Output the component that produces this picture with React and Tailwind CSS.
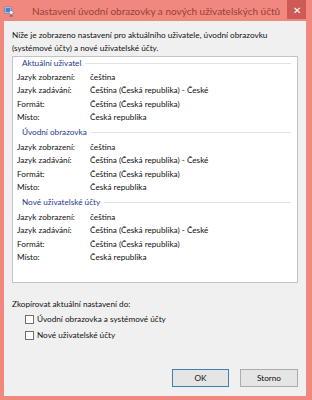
import React from "react";

const sections = [
  { title: "Aktuální uživatel", first: true },
  { title: "Úvodní obrazovka" },
  { title: "Nové uživatelské účty" },
];

const rows = [
  ["Jazyk zobrazení:", "čeština"],
  ["Jazyk zadávání:", "Čeština (Česká republika) - České"],
  ["Formát:", "Čeština (Česká republika)"],
  ["Místo:", "Česká republika"],
];

function Icon() {
  return (
    <svg width="10" height="11" viewBox="0 0 10 11">
      <rect x="0.5" y="1" width="7" height="6" rx="0.5" fill="#dfe9f3" stroke="#5a7fa8" strokeWidth="0.8" />
      <rect x="1.5" y="2" width="5" height="4" fill="#3f86d0" />
      <circle cx="7.2" cy="6.5" r="2" fill="#f3f3f3" stroke="#6d6d6d" strokeWidth="0.6" />
      <path d="M5 10.5 Q7.2 7.5 9.5 10.5 Z" fill="#2f6db5" />
    </svg>
  );
}

export default function App() {
  return (
    <div className="w-[312px] h-[400px] bg-[#f0887d] flex flex-col font-['Lato','Noto_Sans',sans-serif] text-[#111]">
      <div className="h-[21px] flex items-start shrink-0 relative">
        <div className="w-[28px] pl-[4px] pt-[6px] shrink-0">
          <Icon />
        </div>
        <div className="flex-1" />
        <div className="absolute left-0 right-0 top-0 text-center text-[10px] leading-[22px] text-[#9a3f38] whitespace-nowrap pointer-events-none">
          Nastavení úvodní obrazovky a nových uživatelských účtů
        </div>
        <div className="w-[19px] h-[19px] bg-[#cd5a55] mr-[6px] flex items-center justify-center text-white text-[10px] leading-none shrink-0">
          ✕
        </div>
      </div>
      <div className="flex-1 ml-[4px] mr-[6px] mb-[4px] bg-[#f0f0f0] flex flex-col px-[8px] pt-[8px] pb-[9px] text-[8.2px]">
        <div className="leading-[13px]">
          Níže je zobrazeno nastavení pro aktuálního uživatele, úvodní obrazovku
          <br />
          (systémové účty) a nové uživatelské účty.
        </div>
        <div className="mt-[1px] h-[227px] bg-white border border-[#c4c4c4] flex flex-col">
          {sections.map((s) => (
            <div key={s.title} className="flex flex-col">
              <div className={(s.first ? "h-[13px]" : "h-[16px]") + " flex items-center pl-[9px] pr-[6px]"}>
                <span className="text-[#1e3a8c] leading-none">{s.title}</span>
                <div className="flex-1 h-px bg-[#e2e2e2] ml-[4px]" />
              </div>
              {rows.map(([l, v]) => (
                <div key={l} className="h-[13.5px] flex items-center pl-[4px]">
                  <span className="w-[73px] shrink-0">{l}</span>
                  <span>{v}</span>
                </div>
              ))}
            </div>
          ))}
        </div>
        <div className="mt-[15px] leading-[13px]">Zkopírovat aktuální nastavení do:</div>
        <div className="h-[16px] flex items-center pl-[13px]">
          <div className="w-[9px] h-[9px] border border-[#6f6f6f] bg-white mr-[3px]" />
          <span>Úvodní obrazovka a systémové účty</span>
        </div>
        <div className="h-[16px] flex items-center pl-[13px]">
          <div className="w-[9px] h-[9px] border border-[#6f6f6f] bg-white mr-[3px]" />
          <span>Nové uživatelské účty</span>
        </div>
        <div className="flex-1" />
        <div className="flex justify-end gap-[11px]">
          <div className="w-[57px] h-[18px] border border-[#3c7fb1] bg-[#e5e5e5] flex items-center justify-center">OK</div>
          <div className="w-[58px] h-[18px] border border-[#acacac] bg-[#e5e5e5] flex items-center justify-center">Storno</div>
        </div>
      </div>
    </div>
  );
}
